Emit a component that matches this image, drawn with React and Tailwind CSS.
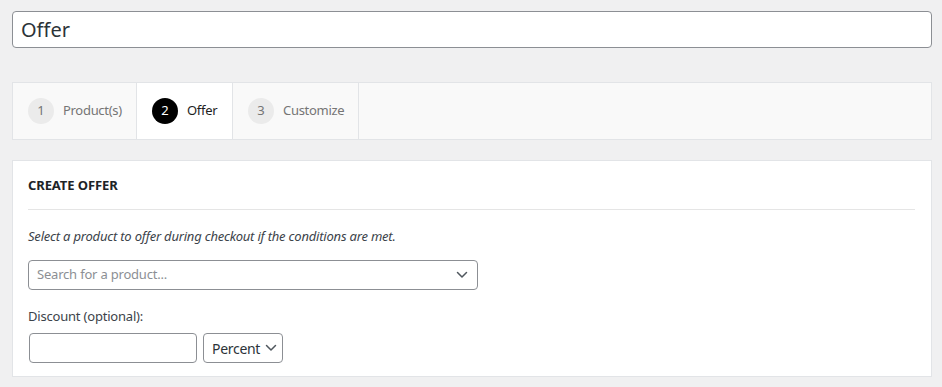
const font = { fontFamily: '"Noto Sans", "Open Sans", sans-serif' };

function Chevron() {
  return (
    <svg width="12" height="8" viewBox="0 0 12 8" fill="none">
      <path d="M1.5 1.5 6 6l4.5-4.5" stroke="#50575e" strokeWidth="1.5" strokeLinecap="round" strokeLinejoin="round" />
    </svg>
  );
}

function Step({ n, label, active, width }) {
  return (
    <div
      className={`flex items-center h-full pl-[15px] border-r border-[#e2e4e7] ${width} ${active ? 'bg-white' : ''}`}
    >
      <span
        className={`w-[26px] h-[26px] shrink-0 rounded-full flex items-center justify-center text-[13px] ${
          active ? 'bg-black text-white' : 'bg-[#ebebeb] text-[#757575]'
        }`}
      >
        {n}
      </span>
      <span
        className={`ml-[9px] text-[13px] tracking-[-0.3px] ${active ? 'text-[#1e1e1e]' : 'text-[#757575]'}`}
      >
        {label}
      </span>
    </div>
  );
}

export default function App() {
  return (
    <div className="w-[942px] h-[387px] bg-[#f0f0f1] pt-[11px] pl-3 pr-[10px] overflow-hidden" style={font}>
      <div className="h-[37px] bg-white border border-[#8c8f94] rounded flex items-center pl-2 text-[20px] text-[#2c3338]">
        Offer
      </div>

      <div className="mt-[34px] h-[58px] bg-[#f9f9f9] border border-[#e2e4e7] flex">
        <Step n="1" label="Product(s)" width="w-[124px]" />
        <Step n="2" label="Offer" width="w-[96px]" active />
        <Step n="3" label="Customize" width="w-[126px]" />
      </div>

      <div className="mt-5 h-[217px] bg-white border border-[#e2e4e7] pl-[15px] pr-4">
        <div className="h-[49px] flex items-center border-b border-[#e5e5e5] pt-[2px]">
          <h2 className="text-[13px] font-bold text-[#1d2327] tracking-[-0.1px]">CREATE OFFER</h2>
        </div>
        <p className="mt-[17px] text-[13px] italic text-[#3c434a] leading-[18px] tracking-[-0.2px]">
          Select a product to offer during checkout if the conditions are met.
        </p>
        <div className="mt-[15px] w-[450px] h-[30px] border border-[#8c8f94] rounded flex items-center justify-between pl-2 pr-[9px]">
          <span className="text-[13px] text-[#8c8f94] tracking-[-0.2px]">Search for a product...</span>
          <Chevron />
        </div>
        <p className="mt-[17px] text-[13px] text-[#3c434a] leading-[18px] tracking-[-0.2px]">Discount (optional):</p>
        <div className="mt-[8px] flex gap-[6px] pl-px">
          <div className="w-[168px] h-[30px] border border-[#8c8f94] rounded" />
          <div className="w-[80px] h-[30px] border border-[#8c8f94] rounded flex items-center pl-2 gap-[5px]">
            <span className="text-[14px] text-[#2c3338] tracking-[-0.3px]">Percent</span>
            <Chevron />
          </div>
        </div>
      </div>
    </div>
  );
}
